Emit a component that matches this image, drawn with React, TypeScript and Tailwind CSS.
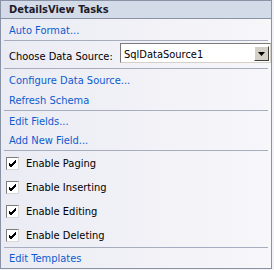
const font = { fontFamily: "'DejaVu Sans Condensed', 'DejaVu Sans', sans-serif" };

function Link({ label, h = "h-[20px]" }: { label: string; h?: string }) {
    return (
        <div className={`${h} flex items-center pl-[8px] text-[#0c5ccf] cursor-pointer whitespace-nowrap`}>
            {label}
        </div>
    );
}

function Sep() {
    return <div className="mx-[3px] h-px bg-[#a7adbf]" />;
}

function Check({ label }: { label: string }) {
    return (
        <div className="h-[24px] flex items-center pl-[5px] gap-[7px] text-black whitespace-nowrap">
            <span className="w-[13px] h-[13px] bg-white border border-t-[#7c7c7c] border-l-[#7c7c7c] border-r-[#d8d8d8] border-b-[#d8d8d8] flex items-center justify-center">
                <svg width="9" height="9" viewBox="0 0 9 9">
                    <path d="M1 4 L3 6 L8 1 M1 5 L3 7 L8 2 M1 6 L3 8 L8 3" stroke="#000" strokeWidth="1" fill="none" />
                </svg>
            </span>
            <span className="pt-[1px]">{label}</span>
        </div>
    );
}

export default function App() {
    return (
        <div className="w-[274px] h-[270px] bg-[#f3f3f7]" style={font}>
            <div className="w-[272px] h-[269px] border border-[#8a92a6] bg-gradient-to-r from-[#ebebf4] to-[#f7f7fa] text-[11px] leading-none flex flex-col">
                {/* header */}
                <div className="h-[18px] shrink-0 bg-[#d4dbe8] border-b border-[#8a92a6] flex items-center pl-[8px] font-bold text-[11px] text-[#1c1c2c] whitespace-nowrap">
                    DetailsView Tasks
                </div>
                <div className="pt-[1px]">
                    <Link label="Auto Format..." />
                </div>
                <Sep />
                <div className="h-[27px] flex items-start pt-[2px] pl-[8px] text-black whitespace-nowrap">
                    <span className="w-[111px] shrink-0 pt-[8px]">Choose Data Source:</span>
                    <div className="w-[151px] h-[20px] bg-white border border-t-[#7a7a7a] border-l-[#7a7a7a] border-r-[#d4d0c8] border-b-[#d4d0c8] flex items-center">
                        <span className="flex-1 pl-[3px] pt-[3px]">SqlDataSource1</span>
                        <span className="w-[15px] h-[15px] mr-[1px] mt-[1px] bg-[#d4d0c8] border border-t-white border-l-white border-r-[#404040] border-b-[#404040] flex items-center justify-center">
                            <svg width="7" height="4" viewBox="0 0 7 4">
                                <path d="M0 0 H7 L3.5 4 Z" fill="#000" />
                            </svg>
                        </span>
                    </div>
                </div>
                <Sep />
                <div className="pt-[1px]">
                    <Link label="Configure Data Source..." />
                    <Link label="Refresh Schema" />
                </div>
                <Sep />
                <div className="pt-[1px]">
                    <Link label="Edit Fields..." h="h-[19px]" />
                    <Link label="Add New Field..." h="h-[19px]" />
                </div>
                <Sep />
                <div>
                    <Check label="Enable Paging" />
                    <Check label="Enable Inserting" />
                    <Check label="Enable Editing" />
                    <Check label="Enable Deleting" />
                </div>
                <Sep />
                <Link label="Edit Templates" />
            </div>
        </div>
    );
}
